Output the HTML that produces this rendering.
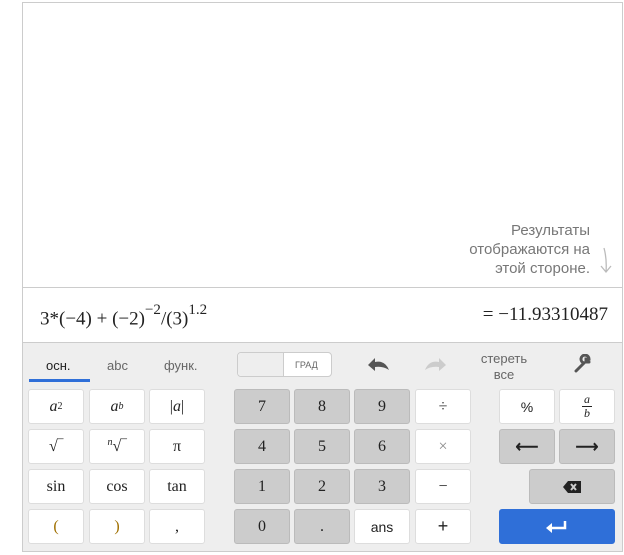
<!DOCTYPE html><html><head><meta charset="utf-8"><style>
*{box-sizing:border-box;margin:0;padding:0}
body{width:624px;height:555px;background:#fff;position:relative;font-family:"Liberation Sans",sans-serif;overflow:hidden}
.box{position:absolute;left:22px;top:2px;width:601px;height:550px;border:1px solid #ccc}
.a{position:absolute}
.b{position:absolute;width:56px;height:35px;border:1px solid #ddd;border-radius:3px;background:#fff;display:flex;align-items:center;justify-content:center;font-family:"Liberation Serif",serif;font-size:16px;color:#222}
.g{background:#ccc;border-color:#bbb}
.s{font-family:"Liberation Sans",sans-serif;font-size:14px}
</style></head><body>
<div class="box"></div>
<div class="a" style="right:34px;top:221px;text-align:right;font-size:15px;line-height:19px;color:#777">Результаты<br>отображаются на<br>этой стороне.</div>
<svg class="a" style="left:598px;top:247px" width="16" height="28" viewBox="0 0 16 28"><path d="M6 1 Q9 12 8 25 M3 19 L8 25 L13 19" fill="none" stroke="#bbb" stroke-width="1.3"/></svg>
<div class="a" style="left:23px;top:287px;width:599px;height:1px;background:#ccc"></div>
<div class="a" style="left:40px;top:305px;font-family:'Liberation Serif',serif;font-size:19px;color:#222;white-space:nowrap">3*(−4) + (−2)<sup style="font-size:15px;position:relative;top:-3px">−2</sup>/(3)<sup style="font-size:15px;position:relative;top:-3px">1.2</sup></div>
<div class="a" style="right:16px;top:304px;font-family:'Liberation Serif',serif;font-size:19px;color:#222">= −11.93310487</div>
<div class="a" style="left:23px;top:342px;width:599px;height:209px;background:#eee;border-top:1px solid #ccc"></div>
<div class="a" style="left:46px;top:358px;font-size:13px;color:#222">осн.</div>
<div class="a" style="left:29px;top:379px;width:61px;height:3px;background:#2f6fd8"></div>
<div class="a" style="left:107px;top:358px;font-size:13px;color:#666">abc</div>
<div class="a" style="left:164px;top:358px;font-size:13px;color:#666">функ.</div>
<div class="a" style="left:237px;top:352px;width:95px;height:25px;border:1px solid #ccc;border-radius:4px;background:#fff"></div>
<div class="a" style="left:238px;top:353px;width:46px;height:23px;border-radius:4px 0 0 4px;background:#eee;border-right:1px solid #ccc"></div>
<div class="a" style="left:295px;top:360px;font-size:9px;color:#666">ГРАД</div>
<svg class="a" style="left:367px;top:356px" width="24" height="16" viewBox="0 0 24 16"><path d="M22 14 Q18 4 8 6 L8 2 L1 9 L8 15 L8 11 Q16 10 22 14Z" fill="#555"/></svg>
<svg class="a" style="left:423px;top:356px" width="24" height="16" viewBox="0 0 24 16"><path d="M2 14 Q6 4 16 6 L16 2 L23 9 L16 15 L16 11 Q8 10 2 14Z" fill="#ccc"/></svg>
<div class="a" style="left:472px;top:351px;width:64px;text-align:center;font-size:13px;line-height:16px;color:#666">стереть<br>все</div>
<svg class="a" style="left:573px;top:354px" width="20" height="20" viewBox="0 0 20 20"><path d="M3 17 L11 9 M11 9 A4 4 0 1 1 16 5 L13 5 L13 8 L16 8" fill="none" stroke="#555" stroke-width="3" stroke-linecap="round"/></svg>
<div class="b" style="left:28px;top:389px"><i>a</i><sup style="font-size:10px">2</sup></div>
<div class="b" style="left:89px;top:389px"><i>a</i><sup style="font-size:10px"><i>b</i></sup></div>
<div class="b" style="left:149px;top:389px">|<i>a</i>|</div>
<div class="b g" style="left:234px;top:389px">7</div>
<div class="b g" style="left:294px;top:389px">8</div>
<div class="b g" style="left:354px;top:389px">9</div>
<div class="b" style="left:415px;top:389px">÷</div>
<div class="b s" style="left:499px;top:389px">%</div>
<div class="b" style="left:559px;top:389px;flex-direction:column;font-size:12px;line-height:11px"><i>a</i><span style="width:10px;height:1px;background:#222;margin:1px 0"></span><i>b</i></div>
<div class="b" style="left:28px;top:429px">√‾</div>
<div class="b" style="left:89px;top:429px"><sup style="font-size:10px;margin-top:-8px"><i>n</i></sup>√‾</div>
<div class="b" style="left:149px;top:429px">π</div>
<div class="b g" style="left:234px;top:429px">4</div>
<div class="b g" style="left:294px;top:429px">5</div>
<div class="b g" style="left:354px;top:429px">6</div>
<div class="b" style="left:415px;top:429px;color:#888">×</div>
<div class="b g" style="left:499px;top:429px;font-weight:bold">⟵</div>
<div class="b g" style="left:559px;top:429px;font-weight:bold">⟶</div>
<div class="b" style="left:28px;top:469px">sin</div>
<div class="b" style="left:89px;top:469px">cos</div>
<div class="b" style="left:149px;top:469px">tan</div>
<div class="b g" style="left:234px;top:469px">1</div>
<div class="b g" style="left:294px;top:469px">2</div>
<div class="b g" style="left:354px;top:469px">3</div>
<div class="b" style="left:415px;top:469px">−</div>
<div class="b g" style="left:529px;top:469px;width:86px"><svg width="18" height="12" viewBox="0 0 18 12"><path d="M5 0 H18 V12 H5 L0 6Z" fill="#222"/><path d="M8 3 L13 9 M13 3 L8 9" stroke="#ccc" stroke-width="2"/></svg></div>
<div class="b" style="left:28px;top:509px;color:#a07000">(</div>
<div class="b" style="left:89px;top:509px;color:#a07000">)</div>
<div class="b" style="left:149px;top:509px">,</div>
<div class="b g" style="left:234px;top:509px">0</div>
<div class="b g" style="left:294px;top:509px">.</div>
<div class="b s" style="left:354px;top:509px">ans</div>
<div class="b s" style="left:415px;top:509px;font-size:18px">+</div>
<div class="b" style="left:499px;top:509px;width:116px;background:#2f6fd8;border-color:#2f6fd8"><svg width="22" height="12" viewBox="0 0 22 12"><path d="M19 0 V7 H4" fill="none" stroke="#fff" stroke-width="2.5"/><path d="M0 7 L6 2 V12Z" fill="#fff"/></svg></div>
</body></html>
